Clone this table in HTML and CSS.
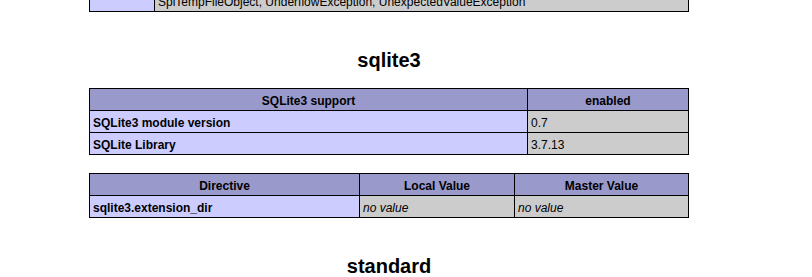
FILE: index.html
```html
<!DOCTYPE html>
<html>
<head>
<meta charset="utf-8">
<title>phpinfo()</title>
<link rel="stylesheet" href="styles.css">
</head>
<body>
<div class="center">
  <div class="tail">
    <table class="t-spl">
      <tr><td class="e">Classes</td><td class="v">SplObjectStorage, SplPriorityQueue, SplQueue, SplStack,<br>SplTempFileObject, UnderflowException, UnexpectedValueException</td></tr>
    </table>
  </div>
  <br>
  <h2><a name="module_sqlite3">sqlite3</a></h2>
  <table class="t-two">
    <tr class="h"><th>SQLite3 support</th><th>enabled</th></tr>
    <tr><td class="e">SQLite3 module version</td><td class="v">0.7</td></tr>
    <tr><td class="e">SQLite Library</td><td class="v">3.7.13</td></tr>
  </table>
  <br>
  <table class="t-three">
    <tr class="h"><th>Directive</th><th>Local Value</th><th>Master Value</th></tr>
    <tr><td class="e">sqlite3.extension_dir</td><td class="v"><i>no value</i></td><td class="v"><i>no value</i></td></tr>
  </table>
  <br>
  <h2><a name="module_standard">standard</a></h2>
</div>
</body>
</html>
```

FILE: styles.css
```css
body {
  margin: 0;
  background-color: #fff;
  color: #000;
  font-family: "Liberation Sans", Arial, sans-serif;
  font-size: 16px;
}

.center {
  width: 778px;
  text-align: center;
}

/* last rows of the previous section, scrolled past the top edge */
.tail {
  height: 12px;
  overflow: hidden;
  display: flex;
  flex-direction: column;
  justify-content: flex-end;
  align-items: center;
}

br {
  line-height: 19px;
}

table {
  border-collapse: collapse;
  table-layout: fixed;
  width: 600px;
  margin-left: auto;
  margin-right: auto;
  text-align: left;
  flex-shrink: 0;
}

td, th {
  border: 1px solid #000;
  font-size: 12px;
  line-height: 15px;
  padding: 5px 3px 1px;
  vertical-align: baseline;
  white-space: nowrap;
  overflow: hidden;
}

td br {
  line-height: 15px;
}

th {
  text-align: center;
}

h2 {
  font-size: 20px;
  line-height: 23px;
  margin: 19px 0 16px;
  font-weight: bold;
}

h2 a {
  color: #000;
  text-decoration: none;
}

.h {
  background-color: #9999cc;
  font-weight: bold;
  color: #000;
}

.e {
  background-color: #ccccff;
  font-weight: bold;
  color: #000;
}

.v {
  background-color: #cccccc;
  color: #000;
}

i {
  color: #000;
  background-color: #cccccc;
}

/* column widths (content box; padding and border come on top) */
.t-spl td:first-child { width: 58px; }
.t-two th:first-child { width: 431px; }
.t-three th:nth-child(1) { width: 263px; }
.t-three th:nth-child(2) { width: 148px; }
```
